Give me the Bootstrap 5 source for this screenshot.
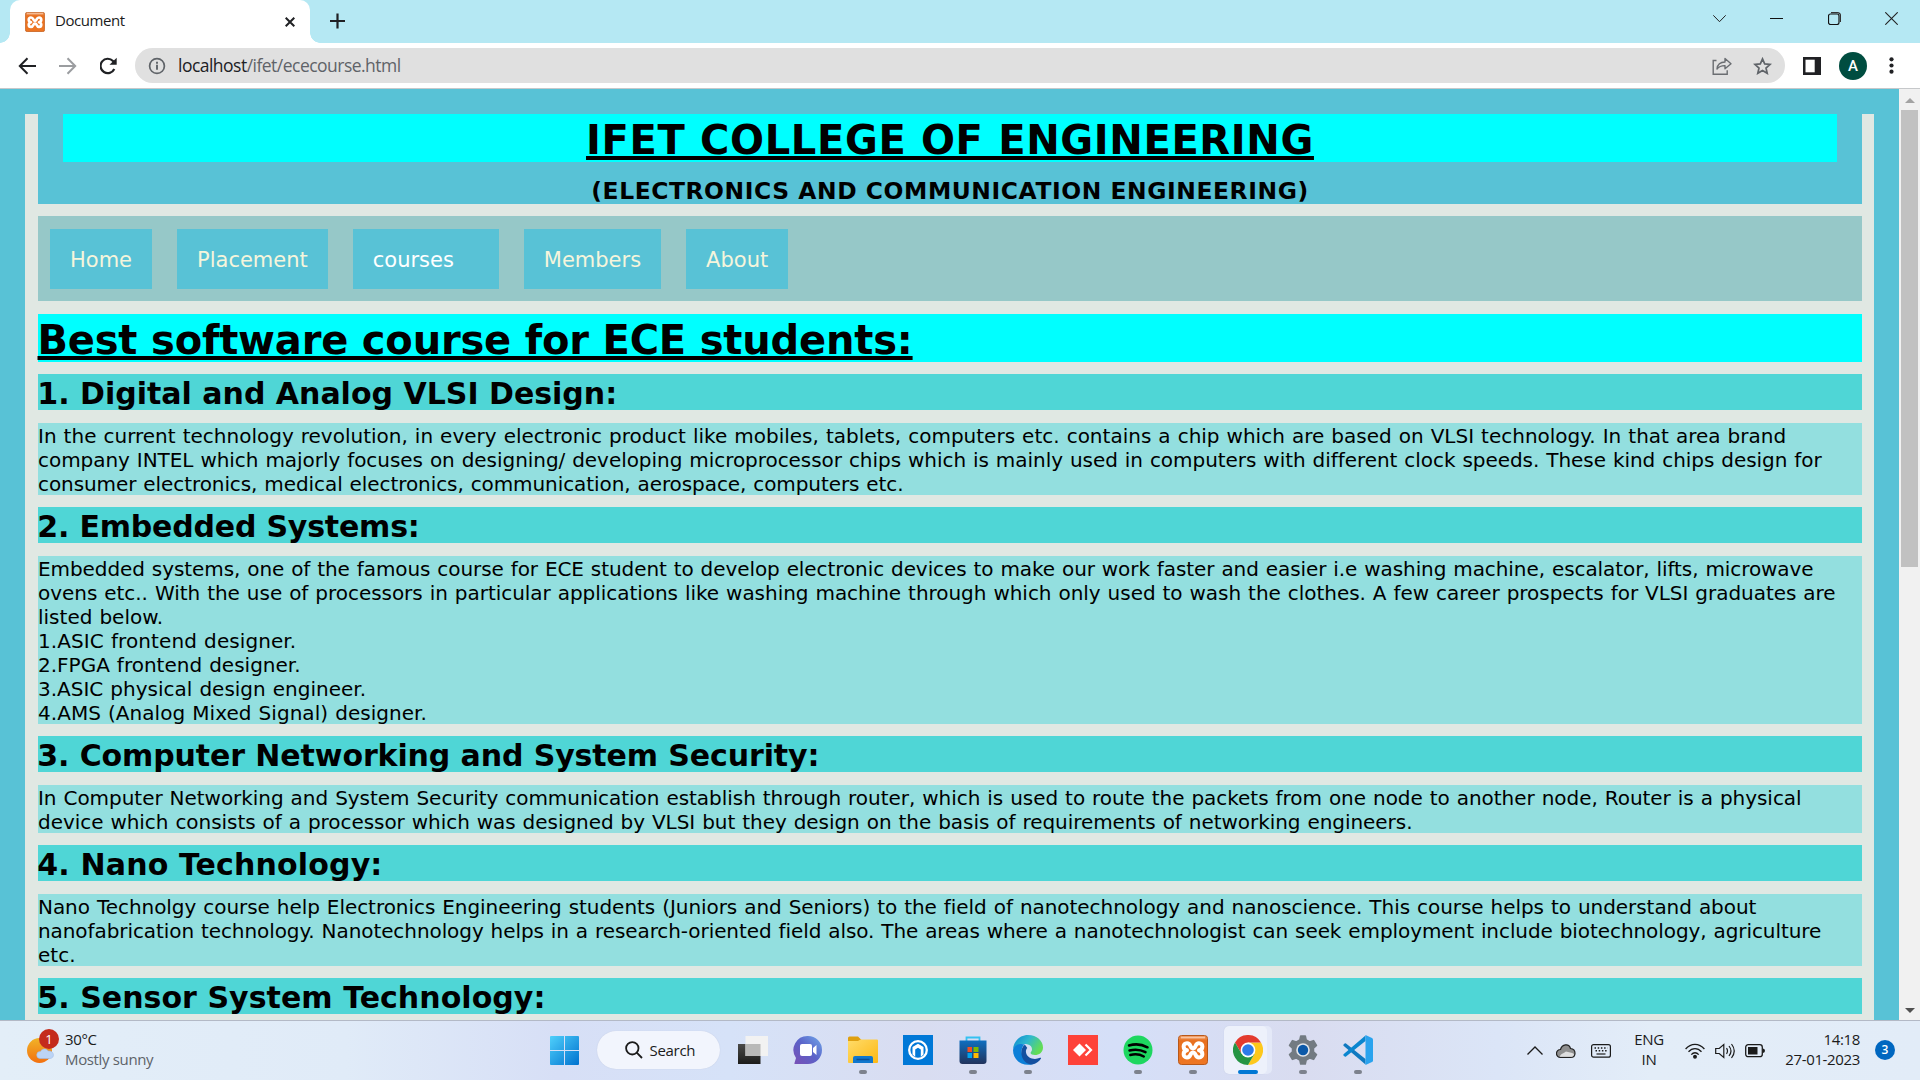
<!DOCTYPE html>
<html lang="en">
<head>
<meta charset="utf-8">
<title>Document</title>
<link rel="stylesheet" href="https://cdn.jsdelivr.net/npm/bootstrap@5.3.0/dist/css/bootstrap.min.css">
<style>
  body{width:1920px;height:1080px;overflow:hidden;font-family:"Open Sans","Noto Sans",sans-serif;font-size:15px;color:#1b1b1b;line-height:20px}
  svg{display:block;flex:none}
  .tabstrip{height:43px;background:#b5e8f3;padding-left:10px}
  .tab{width:300px;height:43px;background:#fff;border-radius:10px 10px 0 0;padding:0 15px;position:relative}
  .tab::before,.tab::after{content:"";position:absolute;bottom:0;width:10px;height:10px}
  .tab::before{left:-10px;background:radial-gradient(circle at 0 0,#b5e8f3 9.5px,#fff 10px)}
  .tab::after{right:-10px;background:radial-gradient(circle at 100% 0,#b5e8f3 9.5px,#fff 10px)}
  .tab-title{margin-left:10px;letter-spacing:-.45px;padding-bottom:4px}
  .new-tab{margin:13px 0 0 20px}
  .win-ctl{gap:44.3px;padding-right:22px;height:37px}
  .toolbar-row{height:46px;background:#fff;border-bottom:1px solid #c6c8ca;padding:0 18px}
  .omnibox{height:35px;border-radius:18px;background:#e0e0e0;padding:0 13px 0 13px;margin-left:18px;width:1650px}
  .url{font-size:17.5px;margin-left:12px;color:#5f6368;letter-spacing:-.52px;padding-bottom:2px}
  .url b{font-weight:400;color:#202124}
  .avatar{width:28px;height:28px;border-radius:50%;background:#004d40;color:#fff;font:500 15px/28px Roboto,sans-serif;text-align:center}
  .view{height:931px;overflow:hidden}
  .site{background:#58c2d6;padding:25px 25px 0;font-family:"DejaVu Sans",sans-serif;color:#000;overflow:hidden}
  .sheet{background:#e0e8e3;padding:0 12px 0 13px;height:1000px}
  .masthead{background:#58c2d6;height:90px;padding:0 25px;text-align:center}
  .big{font-size:40px;font-weight:700;line-height:53px;height:48px;background:#0ff;margin:0;text-decoration:underline 4px;text-underline-offset:2px;white-space:nowrap;letter-spacing:-.19px}
  .masthead .big{letter-spacing:.65px}
  .menu + .big{margin-top:13px;text-indent:-.5px}
  .dept{font-size:23.4px;font-weight:700;line-height:28px;margin:14.500px 0 0;white-space:nowrap;letter-spacing:.58px}
  .menu{background:#96c8c8;height:85px;margin-top:12px;padding:13px 12px;gap:25px}
  .menu a{display:block;height:60px;background:#58c2d6;color:beige;font-size:21px;line-height:62px;padding:0 20px;text-decoration:none;white-space:nowrap}
  .menu .drop{min-width:146px}
  .topic{font-size:30px;font-weight:700;line-height:40px;height:36px;background:#4fd6d6;margin:12px 0 0;white-space:nowrap;text-indent:-.7px}
  .copy{font-size:20px;line-height:24px;background:#93dfdf;margin:13px 0 0;padding-top:1px;white-space:nowrap;word-spacing:.68px}
  .rows-2{height:48px}.rows-3{height:72px}.rows-7{height:168px}
  .t3{letter-spacing:-.04px}.t5{letter-spacing:-.05px}.t8{letter-spacing:-.08px}
  .t11{letter-spacing:-.11px}.t20{letter-spacing:-.2px}
  .w4{letter-spacing:.04px}.w9{letter-spacing:.09px}.w15{letter-spacing:.15px}
  .sbar{width:21px;background:#f1f1f1;padding:7px 2px}
  .thumb{height:457px;background:#c1c1c1;width:17px}
  .taskbar{height:60px;border-top:1px solid #b3b9c6;background:linear-gradient(90deg,#e3eef8 0,#e0ebf8 18%,#d7dff6 29%,#d6e2f8 38%,#d9ddf1 48%,#d5dff8 58%,#d9dcf0 68%,#dbe5f7 78%,#e3edf8 86%,#e2ecf8 100%)}
  .weather{width:537px;padding-left:27px}
  .slot{width:55px;height:59px;padding-bottom:1px;position:relative}
  .run::after{content:"";position:absolute;left:24px;top:49px;width:8px;height:4px;border-radius:2px;background:#7d828d}
  .active-app::before{content:"";position:absolute;left:3.5px;top:5px;width:43px;height:48px;border-radius:5px;background:#edf1fb;box-shadow:5px 0 0 0 #e4e9f8,0 0 1px #bbc4dc}
  .active-app::after{left:18px;width:20px;background:#0078d4}
  .active-app svg{position:relative}
  .pill{width:123px;height:38px;border-radius:19px;background:#f2f5fd;box-shadow:0 0 1px #b9c2dc;margin:0 5px 1px 5px;padding-left:28px}
  .pill .tiny{padding-bottom:1px;margin-left:6.5px;letter-spacing:-.3px}
  .tiny{white-space:nowrap;letter-spacing:-.35px;padding-bottom:3px}
  .count{width:20px;height:20px;border-radius:50%;background:#0067c0;color:#fff;font-size:12px;line-height:19px;font-weight:600;text-align:center;margin:0 0 1px 15px}
  .tray{padding-right:25px}
  .alert-dot{position:absolute;left:12px;top:-9px;width:20px;height:20px;border-radius:50%;background:#c42b1c;color:#fff;font-size:13px;text-align:center;line-height:20px}
  .dim{color:#5d6268}
  .gap-a{margin-left:23px}.gap-b{margin-left:18px}.gap-c{margin-left:10px}.gap-d{margin-left:14px}.gap-e{margin-left:13px}.gap-f{margin-left:21px}
  .lang{width:30px}.clock{width:82px}
</style>
<script src="https://cdn.jsdelivr.net/npm/bootstrap@5.3.0/dist/js/bootstrap.bundle.min.js"></script>
</head>
<body class="d-flex flex-column">
<svg width="0" height="0" class="position-absolute">
  <defs>
    <linearGradient id="gw" x1="0" y1="0" x2="1" y2="1"><stop offset="0" stop-color="#4fd0fb"/><stop offset="1" stop-color="#0072cf"/></linearGradient>
    <linearGradient id="gx" x1="0" y1="0" x2="0" y2="1"><stop offset="0" stop-color="#f1a06a"/><stop offset=".18" stop-color="#e8701f"/><stop offset="1" stop-color="#ee7623"/></linearGradient>
    <linearGradient id="gs" x1="0" y1="0" x2="0" y2="1"><stop offset="0" stop-color="#f0b429"/><stop offset="1" stop-color="#f3700f"/></linearGradient>
    <linearGradient id="gc" x1="1" y1="0" x2="0" y2="1"><stop offset="0" stop-color="#6fa8ea"/><stop offset=".5" stop-color="#5b62c8"/><stop offset="1" stop-color="#7a4fb5"/></linearGradient>
    <linearGradient id="gf" x1="0" y1="0" x2="1" y2="1"><stop offset="0" stop-color="#ffdc6a"/><stop offset="1" stop-color="#fdb813"/></linearGradient>
    <linearGradient id="gst" x1="0" y1="0" x2="0" y2="1"><stop offset="0" stop-color="#0f6fc0"/><stop offset="1" stop-color="#22335c"/></linearGradient>
    <linearGradient id="ge" x1="0" y1="0" x2="1" y2=".5"><stop offset="0" stop-color="#0a84d0"/><stop offset=".5" stop-color="#2fb8cf"/><stop offset="1" stop-color="#63dd55"/></linearGradient>
    <linearGradient id="gt" x1="0" y1="0" x2="0" y2="1"><stop offset="0" stop-color="#4a4a48"/><stop offset="1" stop-color="#1c1c1a"/></linearGradient>
    <symbol id="xampp" viewBox="0 0 30 30"><rect x=".5" y=".5" width="29" height="29" rx="3" fill="url(#gx)" stroke="#b8581a"/><path d="M3 1.800h24v1.600H3z" fill="#f7c3a0"/><path d="M9 15.300C4.500 14.500 4.500 8.200 9 8.200c4.500 0 2.500 5 6 5s1.500-5 6-5 4.500 6.300 0 7.100c4.500.8 4.500 7.100 0 7.100s-2.500-5-6-5-1.500 5-6 5-4.500-6.300 0-7.100z" fill="none" stroke="#fff" stroke-width="4" stroke-linejoin="round"/></symbol>
  </defs>
</svg>

<!-- Tab strip -->
<div class="tabstrip d-flex">
  <div class="tab d-flex align-items-center">
    <svg width="20" height="20"><use href="#xampp"/></svg>
    <span class="tab-title">Document</span>
    <svg class="ms-auto" width="10" height="10" viewBox="0 0 10 10"><path d="M.7.7l8.600 8.600M9.300.7L.7 9.300" stroke="#202124" stroke-width="2"/></svg>
  </div>
  <svg class="new-tab" width="15" height="16" viewBox="0 0 15 16"><path d="M7.500.5v15M0 8h15" stroke="#202124" stroke-width="2.200"/></svg>
  <div class="win-ctl d-flex align-items-center ms-auto">
    <svg width="13" height="13" viewBox="0 0 13 13"><path d="M.3 3.300l6.200 6.400 6.200-6.400" fill="none" stroke="#222"/></svg>
    <svg width="13" height="13" viewBox="0 0 13 13"><path d="M0 6.500h13" stroke="#111"/></svg>
    <svg width="13" height="13" viewBox="0 0 13 13"><rect x=".5" y="2" width="10.500" height="10.500" rx="2" fill="none" stroke="#111" stroke-width="1.200"/><path d="M3 .6h6.500a3 3 0 0 1 3 3V10" fill="none" stroke="#333" stroke-width="1.200"/></svg>
    <svg width="13" height="13" viewBox="0 0 13 13"><path d="M.3.3l12.400 12.400M12.700.3L.3 12.700" stroke="#222" stroke-width="1.100"/></svg>
  </div>
</div>

<!-- Toolbar -->
<div class="toolbar-row d-flex align-items-center">
  <svg width="18" height="18" viewBox="0 0 18 18" fill="none" stroke="#202124" stroke-width="2"><path d="M18 9H2M9.500 1.200L1.800 9l7.700 7.800"/></svg>
  <svg class="gap-a" width="18" height="18" viewBox="0 0 18 18" fill="none" stroke="#9b9da0" stroke-width="2"><path d="M0 9h16M8.500 1.200L16.200 9l-7.700 7.800"/></svg>
  <svg class="gap-a" width="17" height="18" viewBox="1 0 17 18"><path d="M15.300 12A7.200 7.200 0 1 1 14 4l1.500 1.700" fill="none" stroke="#202124" stroke-width="2.200"/><path d="M17.700.8v7H10.500z" fill="#202124"/></svg>
  <div class="omnibox d-flex align-items-center">
    <svg width="18" height="18" viewBox="0 0 18 18"><circle cx="9" cy="9" r="7.400" fill="none" stroke="#5f6368" stroke-width="1.700"/><path d="M9 7.800v5M9 4.800v1.900" stroke="#5f6368" stroke-width="1.900"/></svg>
    <span class="url"><b>localhost</b>/ifet/ececourse.html</span>
    <svg class="ms-auto" width="20" height="18" viewBox="0 0 20 18" fill="none" stroke="#6a6d71" stroke-width="1.400"><path d="M4.500 3.500H1.200v13.700h14v-4"/><path d="M5 12c.5-4.500 3.500-7 8-7V1.500L19 6.800l-6 5V8.600C9.500 8.500 7 9.500 5 12z" stroke-linejoin="round"/></svg>
    <svg class="gap-f" width="19" height="18" viewBox="0 0 19 18"><path d="M9.500 1.900l2.200 5 5.400.5-4.100 3.600 1.200 5.300-4.700-2.800-4.700 2.800L6 11 1.900 7.400l5.400-.5z" fill="none" stroke="#5f6368" stroke-width="1.700"/></svg>
  </div>
  <svg class="gap-b" width="18" height="18" viewBox="0 0 18 18"><path d="M0 0h18v18H0z" fill="#202124"/><path d="M2.500 2.700h9.200v12.600H2.500z" fill="#fff"/></svg>
  <div class="avatar gap-b">A</div>
  <svg class="ms-auto me-2" width="5" height="17" viewBox="0 0 5 17" fill="#202124"><circle cx="2.500" cy="2.300" r="2.100"/><circle cx="2.500" cy="8.500" r="2.100"/><circle cx="2.500" cy="14.700" r="2.100"/></svg>
</div>

<!-- Page -->
<div class="view d-flex">
  <main class="site flex-grow-1">
    <div class="sheet">
      <header class="masthead">
        <h1 class="big">IFET COLLEGE OF ENGINEERING</h1>
        <h3 class="dept">(ELECTRONICS AND COMMUNICATION ENGINEERING)</h3>
      </header>
      <nav class="menu d-flex">
        <a href="#">Home</a><a href="#">Placement</a><a href="#" class="drop text-white">courses</a><a href="#">Members</a><a href="#">About</a>
      </nav>
      <h1 class="big">Best software course for ECE students:</h1>
      <h2 class="topic">1. Digital and Analog VLSI Design:</h2>
      <p class="copy rows-3">In the current technology revolution, in every electronic product like mobiles, tablets, computers etc. contains a chip which are based on VLSI technology. In that area brand<br><span class="t5">company INTEL which majorly focuses on designing/ developing microprocessor chips which is mainly used in computers with different clock speeds. These kind chips design for</span><br><span class="t8">consumer electronics, medical electronics, communication, aerospace, computers etc.</span></p>
      <h2 class="topic t20">2. Embedded Systems:</h2>
      <p class="copy rows-7"><span class="t8">Embedded systems, one of the famous course for ECE student to develop electronic devices to make our work faster and easier i.e washing machine, escalator, lifts, microwave</span><br><span class="t3">ovens etc.. With the use of processors in particular applications like washing machine through which only used to wash the clothes. A few career prospects for VLSI graduates are</span><br>listed below.<br><span class="w9">1.ASIC frontend designer.</span><br>2.FPGA frontend designer.<br>3.ASIC physical design engineer.<br><span class="w4">4.AMS (Analog Mixed Signal) designer.</span></p>
      <h2 class="topic t11">3. Computer Networking and System Security:</h2>
      <p class="copy rows-2"><span class="t3">In Computer Networking and System Security communication establish through router, which is used to route the packets from one node to another node, Router is a physical</span><br><span class="t5">device which consists of a processor which was designed by VLSI but they design on the basis of requirements of networking engineers.</span></p>
      <h2 class="topic w15">4. Nano Technology:</h2>
      <p class="copy rows-3"><span class="t5">Nano Technolgy course help Electronics Engineering students (Juniors and Seniors) to the field of nanotechnology and nanoscience. This course helps to understand about</span><br><span class="t8">nanofabrication technology. Nanotechnology helps in a research-oriented field also. The areas where a nanotechnologist can seek employment include biotechnology, agriculture</span><br>etc.</p>
      <h2 class="topic w4">5. Sensor System Technology:</h2>
    </div>
  </main>
  <div class="sbar d-flex flex-column align-items-center">
    <svg width="10" height="14" viewBox="0 0 10 14"><path d="M0 7L5 2l5 5z" fill="#a3a3a3"/></svg>
    <div class="thumb"></div>
    <svg class="mt-auto" width="10" height="5" viewBox="0 0 10 5"><path d="M0 0l5 5 5-5z" fill="#505050"/></svg>
  </div>
</div>

<!-- Taskbar -->
<div class="taskbar d-flex align-items-center">
  <div class="weather d-flex align-items-center">
    <div class="position-relative"><svg width="28" height="26" viewBox="0 0 28 26"><circle cx="12.500" cy="12.500" r="12.500" fill="url(#gs)"/><path d="M14 20.500a3.500 3.500 0 0 1 .5-7c1-3 6-3.500 7.500-.5 6-1 7.500 7 2 7.500z" transform="translate(-1)" fill="#bcd4f5" stroke="#9dbbe8" stroke-width=".6"/></svg><span class="alert-dot">1</span></div>
    <div class="tiny gap-c">30°C<br><span class="dim">Mostly sunny</span></div>
  </div>
  <div class="slot d-flex align-items-center justify-content-center"><svg width="29" height="29" viewBox="0 0 29 29"><path d="M0 1a1 1 0 0 1 1-1h13v14H0zM15 0h13a1 1 0 0 1 1 1v13H15zM0 15h14v14H1a1 1 0 0 1-1-1zM15 15h14v13a1 1 0 0 1-1 1H15z" fill="url(#gw)"/></svg></div>
  <div class="pill d-flex align-items-center"><svg width="18" height="18" viewBox="0 0 18 18" fill="none" stroke="#1b1b1b" stroke-width="1.800"><circle cx="7.300" cy="7.300" r="6.200"/><path d="M11.700 11.700l5.300 5.300"/></svg><span class="tiny">Search</span></div>
  <div class="slot d-flex align-items-center justify-content-center"><svg width="30" height="28" viewBox="0 0 30 28"><path d="M0 8h22.500v20H0z" fill="url(#gt)"/><path d="M7.500 0H30v20H7.500z" fill="#f2f2f2"/><path d="M7.500 8h15v12h-15z" fill="#b9b9b8"/></svg></div>
  <div class="slot d-flex align-items-center justify-content-center"><svg width="30" height="30" viewBox="0 0 30 30"><path d="M15 1a14 14 0 1 1 0 28H2q-1 0-.5-1l1.500-5A14 14 0 0 1 15 1z" fill="url(#gc)"/><rect x="7" y="9" width="12" height="12" rx="2" fill="#fff"/><path d="M20 13l3.500-3v10L20 17z" fill="#fff"/></svg></div>
  <div class="slot run d-flex align-items-center justify-content-center"><svg width="30" height="28" viewBox="0 0 30 28"><path d="M0 2a1.500 1.500 0 0 1 1.500-1.500H10l3.500 3.500v4H0z" fill="#dfa010"/><path d="M0 5h10l2.500-1.500H29a1 1 0 0 1 1 1V26a1 1 0 0 1-1 1H1a1 1 0 0 1-1-1z" fill="url(#gf)"/><path d="M5 27v-5a2 2 0 0 1 2-2h16a2 2 0 0 1 2 2v5z" fill="#1177cd"/><path d="M8.500 23.500h13" stroke="#0c4f96" stroke-width="1.500"/></svg></div>
  <div class="slot d-flex align-items-center justify-content-center"><svg width="30" height="30" viewBox="0 0 30 30"><path d="M0 0h30v30H0z" fill="#0078d7"/><circle cx="15" cy="15" r="8.800" fill="none" stroke="#fff" stroke-width="2.300"/><path d="M9.500 19.500V12L15 8.800l5.500 3.200v7.500L17.800 22v-7.500L15 12.800l-2.800 1.700V22z" fill="#fff"/></svg></div>
  <div class="slot run d-flex align-items-center justify-content-center"><svg width="30" height="30" viewBox="0 0 30 30"><path d="M8.500 6V2.500h13V6" fill="none" stroke="#35c1f1" stroke-width="1.800"/><path d="M1.500 5.500h27V26a3 3 0 0 1-3 3h-21a3 3 0 0 1-3-3z" fill="url(#gst)"/><path d="M9.500 12H14v5H9.500z" fill="#f25022"/><path d="M15.500 12h5v5h-5z" fill="#7fba00"/><path d="M9.500 18H14v5H9.500z" fill="#00a4ef"/><path d="M15.500 18h5v5h-5z" fill="#ffb900"/></svg></div>
  <div class="slot run d-flex align-items-center justify-content-center"><svg width="30" height="30" viewBox="0 0 30 30"><path d="M0 14.500C.5 6 7 0 15 0c9 0 15 6 15 12.500 0 5-4 7.500-8 7.500-3 0-5.500-1.200-4-3 2-2.500 1-6.500-3-7.500C9 8 2 10 0 14.500z" fill="url(#ge)"/><path d="M0 15C1 9 8 8 12 9.500 9 11 8 15 9 19c1.500 6 6 10 11 10-8 3-20-2-20-14z" fill="#0c7fd8"/><path d="M12 9.800C6 13 7 29 19 29.500c4-.7 7.500-3 9-6 .3-.7-.3-1-1-.7-6 2.700-13 .2-14-5.300-.4-2 .3-3.500 1.300-4.500z" fill="#1450a0"/></svg></div>
  <div class="slot d-flex align-items-center justify-content-center"><svg width="30" height="30" viewBox="0 0 30 30"><path d="M0 0h30v30H0z" fill="#fe4239"/><path d="M11.500 8.500L18 15l-6.500 6.500L5 15z" fill="#fff"/><path d="M17.500 9.500L23 15l-5.500 5.500" fill="none" stroke="#fff" stroke-width="2.200"/></svg></div>
  <div class="slot run d-flex align-items-center justify-content-center"><svg width="30" height="30" viewBox="0 0 30 30"><circle cx="15" cy="15" r="14.500" fill="#1ed760"/><path d="M6 10.500c6-1.800 13-1.200 18.500 1.800M6.500 15.500c5.500-1.500 11-1 16 1.700M7.300 20c4.500-1.200 9.500-.8 13.500 1.500" fill="none" stroke="#000" stroke-width="2.500" stroke-linecap="round"/></svg></div>
  <div class="slot run d-flex align-items-center justify-content-center"><svg width="30" height="30"><use href="#xampp"/></svg></div>
  <div class="slot run active-app d-flex align-items-center justify-content-center"><svg width="30" height="30" viewBox="0 0 30 30"><path d="M15 7.500h13A15 15 0 0 1 15 30l6.500-11.200z" fill="#fdc81c"/><path d="M8.500 18.700L2 7.500A15 15 0 0 1 28 7.500H15z" fill="#e33b2e"/><path d="M21.500 18.700L15 30A15 15 0 0 1 2 7.500l6.500 11.200z" fill="#259443"/><circle cx="15" cy="15" r="7.400" fill="#fff"/><circle cx="15" cy="15" r="5.800" fill="#2d7bea"/></svg></div>
  <div class="slot run d-flex align-items-center justify-content-center"><svg width="30" height="30" viewBox="0 0 30 30"><path d="M11.800 5L12.700 1h4.600l.9 4 3.400 2 4-1.400 2.900 4.800-3 2.700v3.800l3 2.700-2.900 4.800-4-1.400-3.400 2-.9 4h-4.600l-.9-4-3.400-2-4 1.400-2.900-4.800 3-2.700v-3.800l-3-2.700 2.900-4.800 4 1.400z" fill="#737b82" stroke="#737b82" stroke-linejoin="round" stroke-width="1.500"/><circle cx="15" cy="15" r="6.800" fill="#e3e6ea"/><circle cx="15" cy="15" r="5.200" fill="#0c59a8"/></svg></div>
  <div class="slot run d-flex align-items-center justify-content-center"><svg width="30" height="30" viewBox="0 0 30 30"><path d="M3 8.500L22.500 24v5.500L.8 11c-.7-.7-.6-1.300 0-1.800L2 8.300q.5-.3 1 .2z" fill="#0f79c0"/><path d="M3 21.500L22.500 6V.5L.8 19c-.7.700-.6 1.300 0 1.800l1.200.9q.5.300 1-.2z" fill="#0a86cf"/><path d="M22.500 0L29 3q1 .5 1 1.500v21q0 1-1 1.500l-6.500 3z" fill="#2aa3ee"/></svg></div>

  <div class="tray d-flex align-items-center ms-auto">
    <svg width="16" height="9" viewBox="0 0 16 9"><path d="M.5 8.500L8 1l7.500 7.500" fill="none" stroke="#1b1b1b" stroke-width="1.300"/></svg>
    <svg class="gap-e" width="20" height="16" viewBox="0 0 20 16"><path d="M4.500 14.500a4 4 0 0 1 0-8C6 1 13 0 14.500 5.500c6 .5 6 9 0 9z" fill="#8f8f8f" stroke="#222" stroke-width="1.200"/><path d="M4 13.800c0-3 4-3.500 6-5.300 2.500 1 6 1 8 2.500 0 2-1.500 2.800-3.500 2.800z" fill="#dedede"/></svg>
    <svg class="gap-d" width="21" height="14" viewBox="-1 0 21 14"><rect x=".6" y=".6" width="18.800" height="12.600" rx="2" fill="none" stroke="#1b1b1b" stroke-width="1.200"/><path d="M3.500 4h13M4.500 6.800h12" stroke="#1b1b1b" stroke-width="1.400" stroke-dasharray="1.500 1.700"/><path d="M5.500 10h9" stroke="#1b1b1b" stroke-width="1.200"/></svg>
    <div class="tiny lang text-center gap-a">ENG<br>IN</div>
    <svg class="gap-f" width="20" height="16" viewBox="0 0 20 16" fill="none" stroke="#1b1b1b" stroke-width="1.300"><path d="M.6 6C6-.3 14-.3 19.400 6M3.500 8.800c3.800-4.300 9.200-4.300 13 0M6.300 11.600c2.200-2.500 5.200-2.500 7.400 0"/><circle cx="10" cy="13.800" r="1.300" fill="#1b1b1b"/></svg>
    <svg class="gap-c" width="20" height="16" viewBox="0 0 20 16" fill="none" stroke="#1b1b1b" stroke-width="1.200"><path d="M.7 5.500h3.500L8.800 1.500v13L4.200 10.500H.7z"/><path d="M11.500 5.200q2 2.800 0 5.600M14 3q4 5 0 10M16.500 1q5.500 7 0 14"/></svg>
    <svg class="gap-c" width="20" height="14" viewBox="0 0 20 14"><rect x=".7" y=".7" width="16.600" height="12" rx="2.500" fill="none" stroke="#1b1b1b" stroke-width="1.300"/><path d="M3 3h9.500v7.500H3z" fill="#1b1b1b"/><path d="M18 4.500q2 .2 2 2.200t-2 2.200z" fill="#1b1b1b"/></svg>
    <div class="tiny clock text-end gap-e">14:18<br>27-01-2023</div>
    <div class="count">3</div>
  </div>
</div>
</body>
</html>
